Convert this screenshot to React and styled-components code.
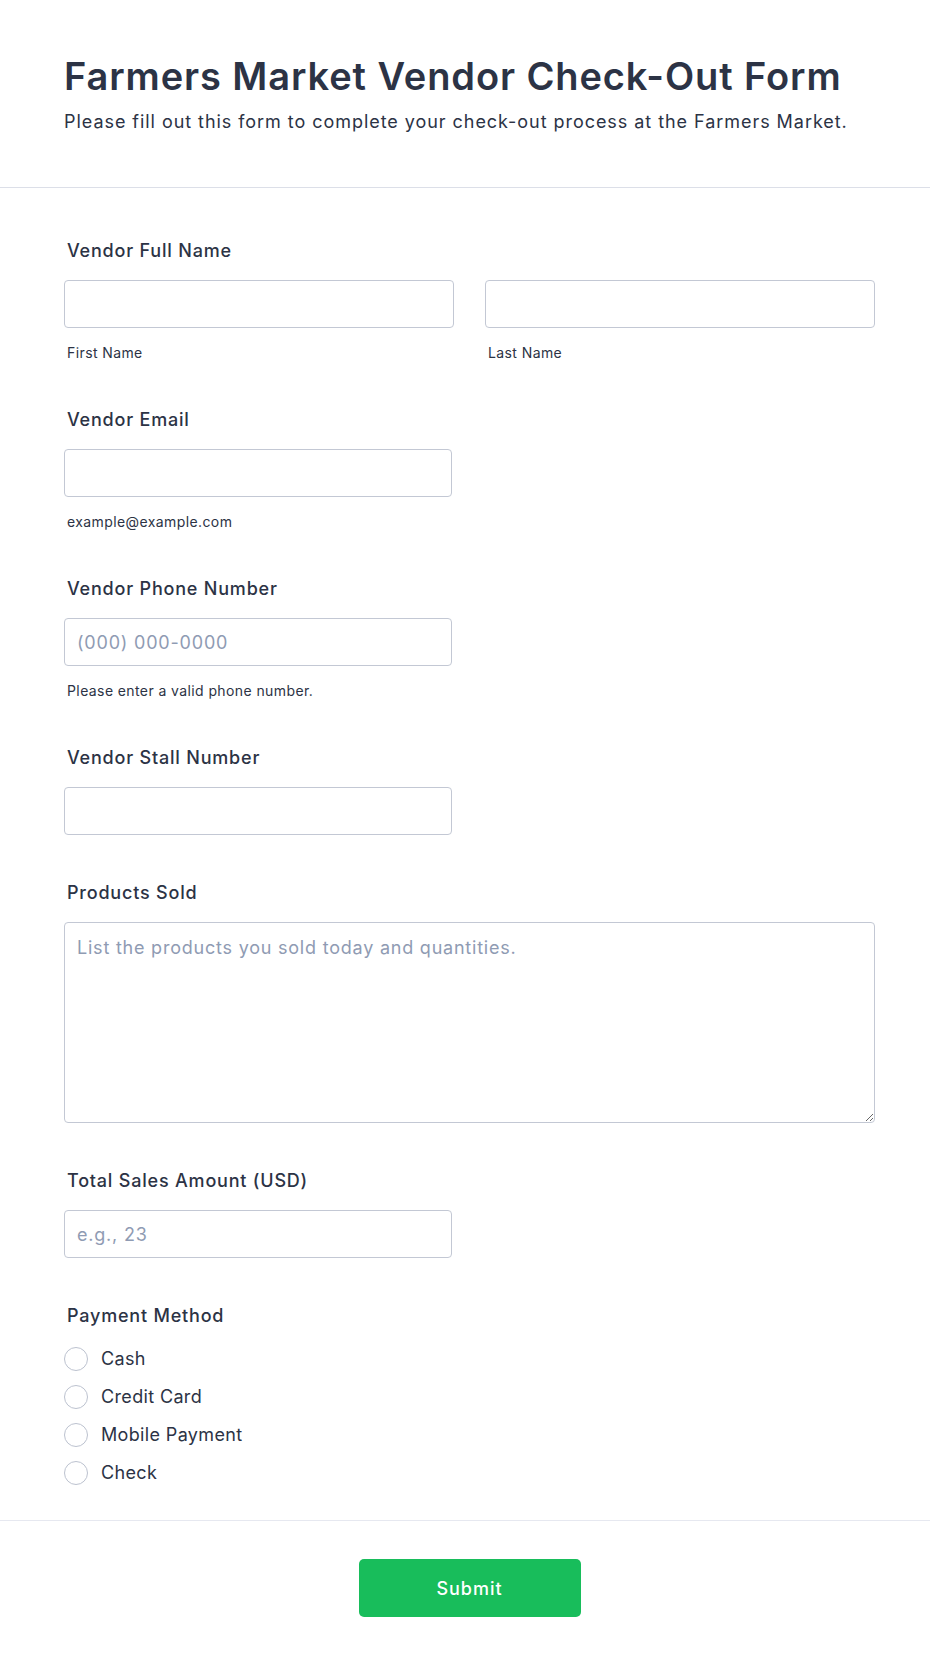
import React from 'react';
import styled, { createGlobalStyle } from 'styled-components';

const GlobalStyle = createGlobalStyle`
  body {
    margin: 0;
    background: #ffffff;
    font-family: Inter, "Noto Sans", sans-serif;
    color: #2c3345;
  }
  * {
    box-sizing: border-box;
  }
`;

const Page = styled.div`
  width: 930px;
  background: #ffffff;
`;

const Header = styled.header`
  padding: 53px 55px 54px 64px;
  border-bottom: 1px solid #dcdfe8;
`;

const Title = styled.h1`
  margin: 0;
  font-size: 38px;
  line-height: 46px;
  font-weight: 600;
  color: #2c3345;
  letter-spacing: 0.9px;
`;

const Subtitle = styled.p`
  margin: 12px 0 0;
  font-size: 18px;
  line-height: 22px;
  font-weight: 400;
  color: #2c3345;
  letter-spacing: 0.95px;
`;

const FormBody = styled.div`
  padding: 52px 55px 35px 64px;
  border-bottom: 1px solid #e6e8f0;
  display: flex;
  flex-direction: column;
  gap: 47px;
`;

const Field = styled.div`
  display: flex;
  flex-direction: column;
`;

const Label = styled.label`
  display: block;
  padding-left: 3px;
  font-size: 18px;
  line-height: 22px;
  font-weight: 500;
  color: #2c3345;
  letter-spacing: 0.8px;
  margin-bottom: 18px;
`;

const Row = styled.div`
  display: grid;
  grid-template-columns: 390px 390px;
  column-gap: 31px;
`;

const Column = styled.div`
  display: flex;
  flex-direction: column;
`;

const Input = styled.input`
  width: ${(p) => p.$width || '100%'};
  height: 48px;
  padding: 0 12px;
  border: 1px solid #c3c8d4;
  border-radius: 4px;
  font-family: Inter, "Noto Sans", sans-serif;
  font-size: 18px;
  letter-spacing: 0.8px;
  color: #2c3345;
  background: #ffffff;
  outline: none;

  &::placeholder {
    color: #8f9bb3;
  }
`;

const TextArea = styled.textarea`
  width: 100%;
  height: 201px;
  padding: 14px 12px;
  border: 1px solid #c3c8d4;
  border-radius: 4px;
  font-family: Inter, "Noto Sans", sans-serif;
  font-size: 18px;
  line-height: 22px;
  letter-spacing: 0.78px;
  color: #2c3345;
  background: #ffffff;
  outline: none;
  display: block;

  &::placeholder {
    color: #8f9bb3;
  }
`;

const SubLabel = styled.span`
  display: block;
  margin-top: 16px;
  padding-left: 3px;
  font-size: 14px;
  line-height: 18px;
  letter-spacing: 0.4px;
  color: #2c3345;
`;

const RadioList = styled.div`
  display: flex;
  flex-direction: column;
  gap: 14px;
  margin-top: 2px;
`;

const RadioRow = styled.label`
  display: flex;
  align-items: center;
  gap: 13px;
  font-size: 18px;
  line-height: 24px;
  letter-spacing: 0.35px;
  color: #2c3345;
  cursor: pointer;
`;

const RadioCircle = styled.span`
  width: 24px;
  height: 24px;
  border-radius: 50%;
  border: 1.5px solid #bcc2cf;
  background: #ffffff;
  flex-shrink: 0;
`;

const Footer = styled.div`
  padding: 38px 55px 50px 64px;
  display: flex;
  justify-content: center;
`;

const SubmitButton = styled.button`
  width: 222px;
  height: 58px;
  border: none;
  border-radius: 5px;
  background: #18bd5b;
  color: #ffffff;
  font-family: Inter, "Noto Sans", sans-serif;
  font-size: 18px;
  font-weight: 500;
  letter-spacing: 1px;
  cursor: pointer;
`;

const payments = ['Cash', 'Credit Card', 'Mobile Payment', 'Check'];

export default function App() {
  return (
    <Page>
      <GlobalStyle />
      <Header>
        <Title>Farmers Market Vendor Check-Out Form</Title>
        <Subtitle>
          Please fill out this form to complete your check-out process at the Farmers Market.
        </Subtitle>
      </Header>

      <FormBody>
        <Field>
          <Label>Vendor Full Name</Label>
          <Row>
            <Column>
              <Input type="text" />
              <SubLabel>First Name</SubLabel>
            </Column>
            <Column>
              <Input type="text" />
              <SubLabel>Last Name</SubLabel>
            </Column>
          </Row>
        </Field>

        <Field>
          <Label>Vendor Email</Label>
          <Input type="email" $width="388px" />
          <SubLabel>example@example.com</SubLabel>
        </Field>

        <Field>
          <Label>Vendor Phone Number</Label>
          <Input type="tel" $width="388px" placeholder="(000) 000-0000" />
          <SubLabel>Please enter a valid phone number.</SubLabel>
        </Field>

        <Field>
          <Label>Vendor Stall Number</Label>
          <Input type="text" $width="388px" />
        </Field>

        <Field>
          <Label>Products Sold</Label>
          <TextArea placeholder="List the products you sold today and quantities." />
        </Field>

        <Field>
          <Label>Total Sales Amount (USD)</Label>
          <Input type="text" $width="388px" placeholder="e.g., 23" />
        </Field>

        <Field>
          <Label>Payment Method</Label>
          <RadioList>
            {payments.map((p) => (
              <RadioRow key={p}>
                <RadioCircle />
                {p}
              </RadioRow>
            ))}
          </RadioList>
        </Field>
      </FormBody>

      <Footer>
        <SubmitButton type="button">Submit</SubmitButton>
      </Footer>
    </Page>
  );
}
